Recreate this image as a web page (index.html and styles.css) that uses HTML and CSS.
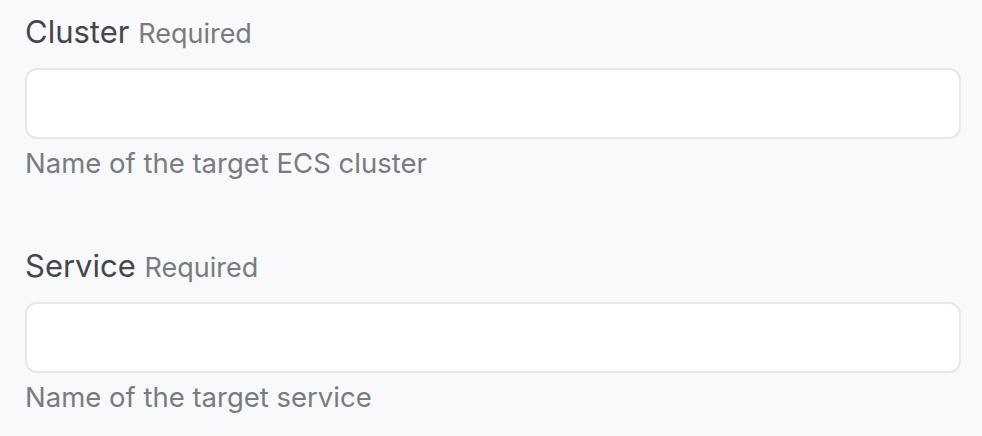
FILE: index.html
```html
<!DOCTYPE html>
<html>
<head>
<meta charset="utf-8">
<link rel="stylesheet" href="styles.css">
</head>
<body>
<div class="form">
  <div class="field">
    <label class="label">Cluster <span class="req">Required</span></label>
    <input class="input" type="text">
    <div class="help">Name of the target ECS cluster</div>
  </div>
  <div class="field">
    <label class="label">Service <span class="req">Required</span></label>
    <input class="input" type="text">
    <div class="help">Name of the target service</div>
  </div>
</div>
</body>
</html>
```
FILE: styles.css
```css
html, body {
  margin: 0;
  padding: 0;
  background: #f8f9fb;
}
body {
  font-family: Inter, "Liberation Sans", sans-serif;
}
.form {
  display: flex;
  flex-direction: column;
  gap: 63px;
  padding: 12px 21px 0 25px;
}
.field {
  display: flex;
  flex-direction: column;
}
.label {
  font-size: 31px;
  line-height: 40px;
  color: #46464b;
  margin-bottom: 14px;
}
.req {
  font-size: 27px;
  color: #7a7b80;
}
.input {
  box-sizing: border-box;
  height: 71px;
  width: 100%;
  margin: 0;
  background: #fff;
  border: 2px solid #e6e7eb;
  border-radius: 12px;
  outline: none;
}
.help {
  font-size: 27.5px;
  line-height: 40px;
  color: #7a7b80;
  margin-top: 4px;
}
```
